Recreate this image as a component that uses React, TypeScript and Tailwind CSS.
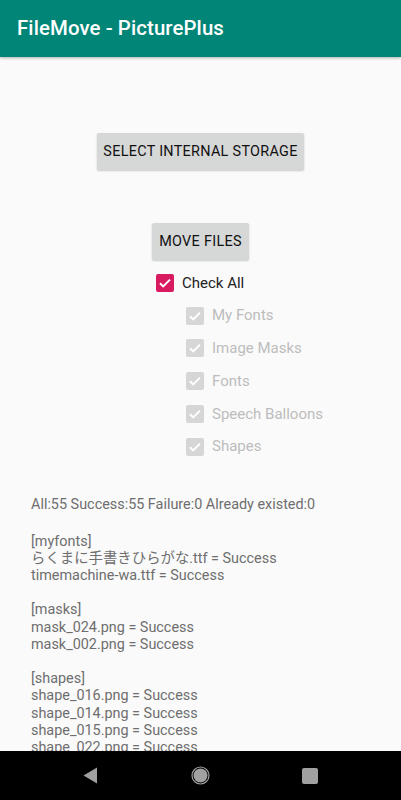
import React from 'react';

const font = { fontFamily: 'Roboto, "Noto Sans CJK JP", sans-serif' };

const CheckBox: React.FC<{ disabled?: boolean }> = ({ disabled }) => (
  <div
    className={`flex h-[18px] w-[18px] items-center justify-center rounded-[2px] ${
      disabled ? 'bg-[#d6d6d6]' : 'bg-[#d81b60]'
    }`}
  >
    <svg viewBox="0 0 18 18" className="h-[18px] w-[18px]">
      <path d="M4 9.2l3.2 3.2L14 5.6" fill="none" stroke="#fff" strokeWidth="2" />
    </svg>
  </div>
);

const groups = ['My Fonts', 'Image Masks', 'Fonts', 'Speech Balloons', 'Shapes'];

const log = [
  '[myfonts]',
  'らくまに手書きひらがな.ttf = Success',
  'timemachine-wa.ttf = Success',
  '',
  '[masks]',
  'mask_024.png = Success',
  'mask_002.png = Success',
  '',
  '[shapes]',
  'shape_016.png = Success',
  'shape_014.png = Success',
  'shape_015.png = Success',
  'shape_022.png = Success',
  'shape_019.png = Success',
];

export default function App() {
  return (
    <div className="relative flex h-[800px] w-[401px] flex-col overflow-hidden bg-[#fafafa]" style={font}>
      {/* Toolbar */}
      <div className="z-10 flex h-[57px] shrink-0 items-center bg-[#008577] pl-[17px] shadow-[0_1px_3px_rgba(0,0,0,0.3)]">
        <span className="text-[20.4px] font-medium tracking-[0.1px] text-white">FileMove - PicturePlus</span>
      </div>

      <div className="flex flex-1 flex-col overflow-hidden">
        <div className="flex flex-col items-center pt-[76px]">
          <button className="h-[37px] w-[207px] rounded-[2px] bg-[#d6d7d7] text-[14.4px] font-normal tracking-[0.3px] text-[#111] shadow-[0_1px_2px_rgba(0,0,0,0.2)]">
            SELECT INTERNAL STORAGE
          </button>
          <button className="mt-[53px] h-[37px] w-[97px] rounded-[2px] bg-[#d6d7d7] text-[14.4px] font-normal tracking-[0.3px] text-[#111] shadow-[0_1px_2px_rgba(0,0,0,0.2)]">
            MOVE FILES
          </button>
        </div>

        <div className="mt-[13px] flex flex-col pl-[156px]">
          <div className="flex h-[20px] items-center gap-[8px]">
            <CheckBox />
            <span className="text-[15px] text-[#212121]">Check All</span>
          </div>
          <div className="mt-[12.5px] flex flex-col gap-[12.75px] pl-[30px]">
            {groups.map((g) => (
              <div key={g} className="flex h-[20px] items-center gap-[8px]">
                <CheckBox disabled />
                <span className="text-[15px] text-[#bdbdbd]">{g}</span>
              </div>
            ))}
          </div>
        </div>

        <div className="mt-[39px] pl-[31px] text-[14.4px] leading-[17.2px] text-[#6e6e6e]">
          <div className="h-[17.2px] whitespace-nowrap">All:55 Success:55 Failure:0 Already existed:0</div>
          <div className="mt-[20px]">
            {log.map((line, i) => (
              <div key={i} className="h-[17.2px] whitespace-nowrap">
                {line}
              </div>
            ))}
          </div>
        </div>
      </div>

      {/* Navigation bar */}
      <div className="absolute bottom-0 left-0 flex h-[49px] w-full items-center bg-black">
        <div className="flex w-full items-center justify-between pl-[83px] pr-[83px]">
          <svg width="15" height="17" viewBox="0 0 15 17">
            <path d="M14 0.5 L14 16.5 L0.5 8.5 Z" fill="#a0a0a0" />
          </svg>
          <svg width="19" height="19" viewBox="0 0 19 19">
            <circle cx="9.5" cy="9.5" r="8.5" fill="none" stroke="#a0a0a0" strokeWidth="1.2" />
            <circle cx="9.5" cy="9.5" r="7" fill="#a0a0a0" />
          </svg>
          <div className="h-[16px] w-[16px] rounded-[2px] bg-[#a0a0a0]" />
        </div>
      </div>
    </div>
  );
}
